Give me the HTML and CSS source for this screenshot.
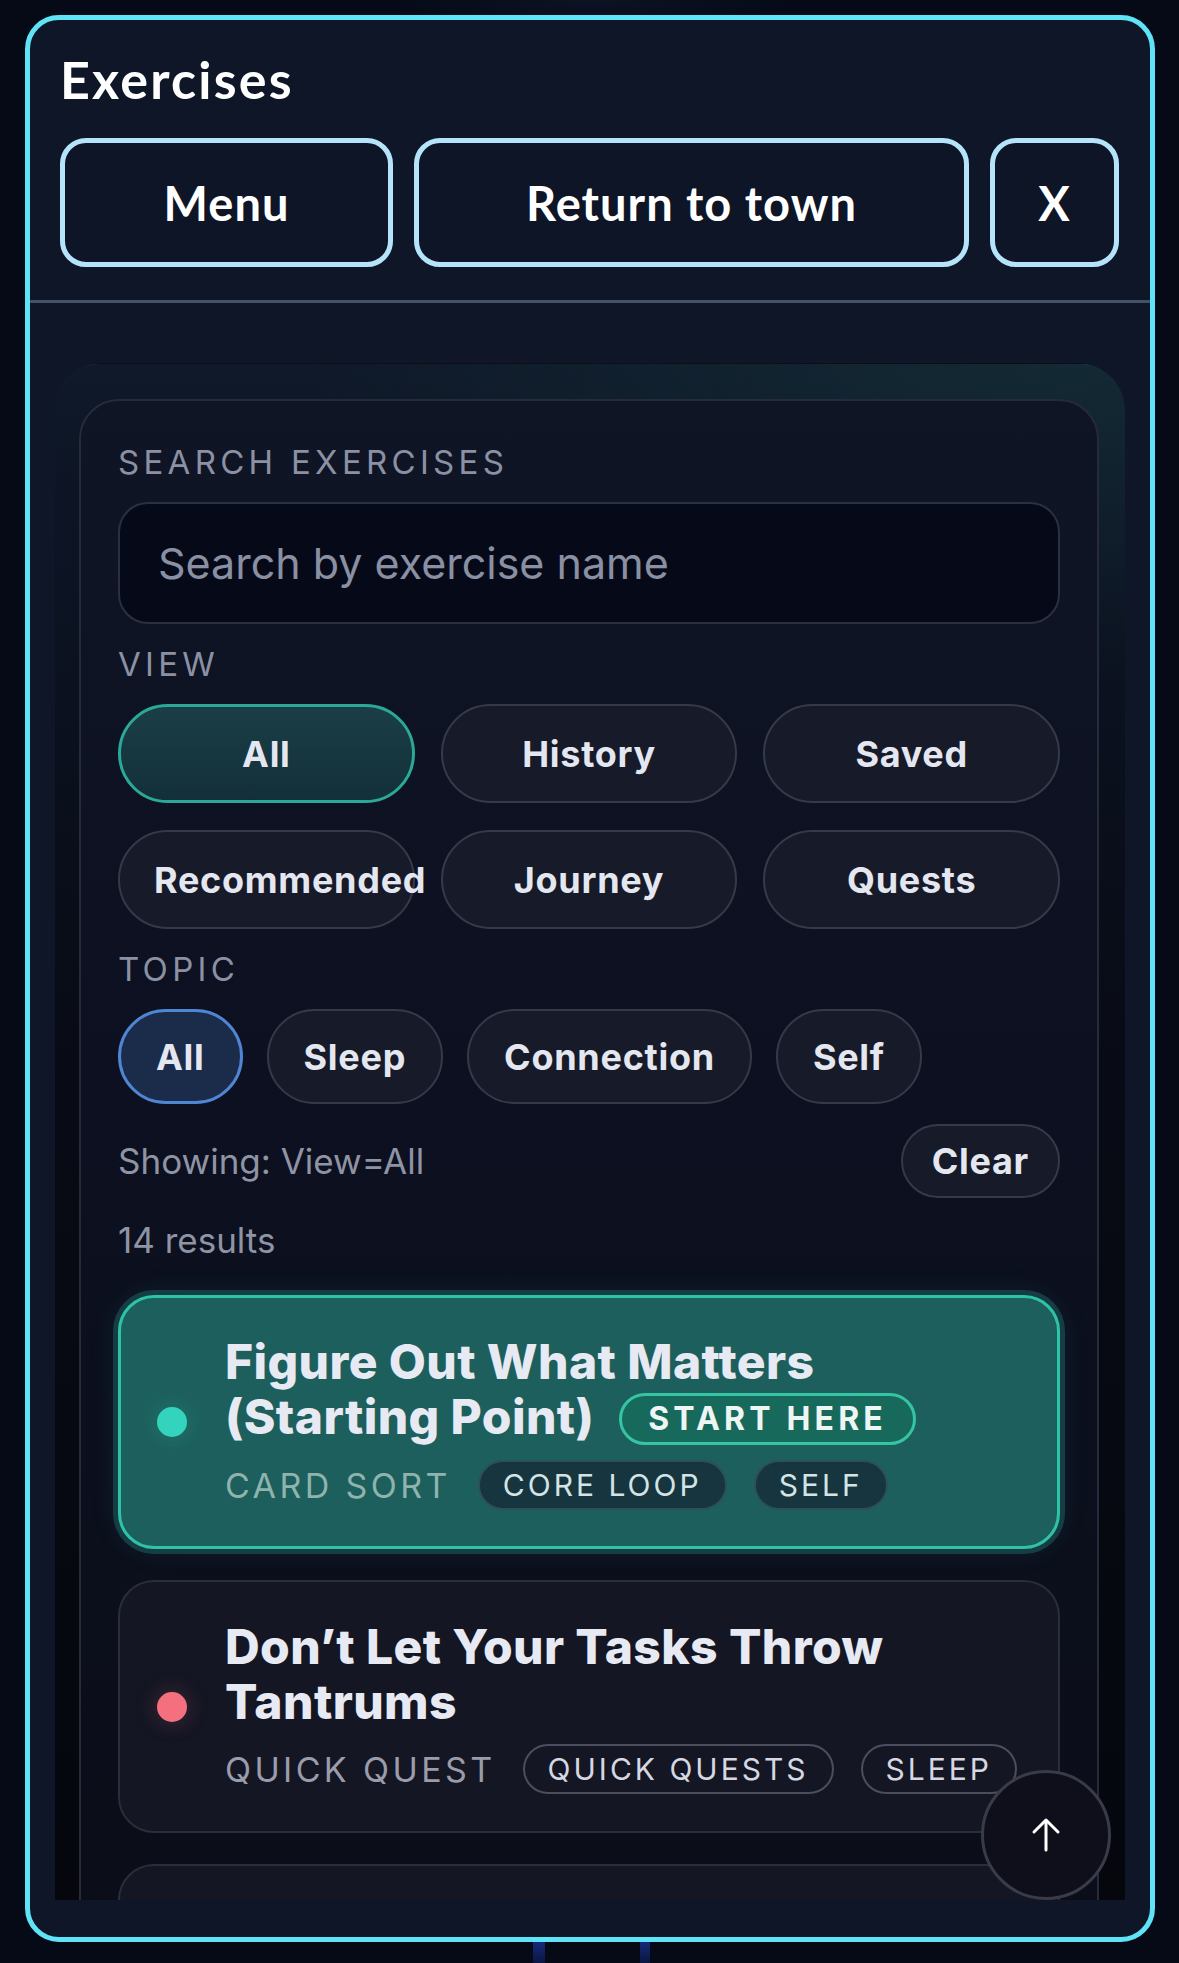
FILE: index.html
```html
<!DOCTYPE html>
<html lang="en">
<head>
    <meta charset="UTF-8">
    <meta name="viewport" content="width=device-width, initial-scale=1.0">
    <title>Exercises</title>
    <link rel="stylesheet" href="styles.css">
</head>
<body>

    <div class="panel">
        <header class="panel-head">
            <h1 class="panel-title">Exercises</h1>
            <div class="head-actions">
                <button class="head-btn">Menu</button>
                <button class="head-btn">Return to town</button>
                <button class="head-btn">X</button>
            </div>
        </header>

        <div class="panel-scroll">
            <section class="shell">
                <div class="filters">
                    <label class="field-label" for="search">Search exercises</label>
                    <input id="search" class="search" type="text" placeholder="Search by exercise name">

                    <div class="field-label">View</div>
                    <div class="view-grid">
                        <button class="chip chip-view is-active">All</button>
                        <button class="chip chip-view">History</button>
                        <button class="chip chip-view">Saved</button>
                        <button class="chip chip-view">Recommended</button>
                        <button class="chip chip-view">Journey</button>
                        <button class="chip chip-view">Quests</button>
                    </div>

                    <div class="field-label">Topic</div>
                    <div class="topic-row">
                        <button class="chip chip-topic is-active">All</button>
                        <button class="chip chip-topic">Sleep</button>
                        <button class="chip chip-topic">Connection</button>
                        <button class="chip chip-topic">Self</button>
                    </div>

                    <div class="status-row">
                        <span class="muted">Showing: View=All</span>
                        <button class="chip chip-clear">Clear</button>
                    </div>
                    <div class="muted count">14 results</div>

                    <!-- Results -->
                    <ul class="results">
                        <li class="result is-start">
                            <span class="dot dot-teal"></span>
                            <div class="result-body">
                                <div class="result-title"><span>Figure Out What Matters (Starting Point)</span> <span class="badge">Start here</span></div>
                                <div class="result-meta">
                                    <span class="kind">Card sort</span>
                                    <span class="tag">Core loop</span>
                                    <span class="tag">Self</span>
                                </div>
                            </div>
                        </li>
                        <li class="result">
                            <span class="dot dot-red"></span>
                            <div class="result-body">
                                <div class="result-title">Don’t Let Your Tasks Throw Tantrums</div>
                                <div class="result-meta">
                                    <span class="kind">Quick quest</span>
                                    <span class="tag">Quick quests</span>
                                    <span class="tag">Sleep</span>
                                </div>
                            </div>
                        </li>
                        <li class="result">
                            <span class="dot dot-teal"></span>
                            <div class="result-body">
                                <div class="result-title">Sort Your Week</div>
                                <div class="result-meta">
                                    <span class="kind">Card sort</span>
                                    <span class="tag">Self</span>
                                </div>
                            </div>
                        </li>
                    </ul>
                </div>
            </section>
        </div>

        <button class="to-top" aria-label="Back to top">
            <svg width="40" height="40" viewBox="0 0 40 40" fill="none" stroke="#ffffff" stroke-width="3" stroke-linecap="round" stroke-linejoin="round">
                <path d="M20 35V6"/>
                <path d="M8 17L20 5L32 17"/>
            </svg>
        </button>
    </div>

</body>
</html>
```

FILE: styles.css
```css
html, body {
    margin: 0;
    min-height: 1963px;
}
body {
    font-family: "Inter", "Noto Sans", sans-serif;
    color: #e6e9f2;
    overflow: hidden;
    background:
        linear-gradient(#15297a, #0b1640) 533px 1942px / 12px 21px no-repeat,
        linear-gradient(#15297a, #0b1640) 640px 1942px / 10px 21px no-repeat,
        radial-gradient(ellipse 200px 30px at 590px 0, #0c1324, transparent),
        #050a16;
}

/* outer frame */
.panel {
    position: relative;
    box-sizing: border-box;
    width: 1130px;
    height: 1927px;
    margin: 15px 0 0 25px;
    padding-bottom: 37px;
    border: 5px solid #5ee4f6;
    border-radius: 34px;
    background: #0e1627;
    display: flex;
    flex-direction: column;
    overflow: hidden;
}
.panel-head {
    padding: 29px 31px 33px 30px;
    border-bottom: 3px solid #435266;
}
.panel-title {
    margin: 0 0 28px;
    font: 700 52px/61px "Lato", sans-serif;
    letter-spacing: 2.2px;
    color: #ffffff;
}
.head-actions {
    display: grid;
    grid-template-columns: 333px 1fr 129px;
    gap: 21px;
}
.head-btn {
    height: 129px;
    box-sizing: border-box;
    border: 5px solid #b5e3fa;
    border-radius: 26px;
    background: #0d1526;
    color: #ffffff;
    font: 700 47px "Lato", sans-serif;
    letter-spacing: 1px;
    padding: 0;
}

/* scrolling area */
.panel-scroll {
    flex: 1;
    overflow: hidden;
    padding: 60px 25px 0;
}
.shell {
    border-radius: 48px 48px 0 0;
    padding: 35px 26px 0 24px;
    border-top: 1px solid rgba(255, 255, 255, 0.04);
    background:
        radial-gradient(ellipse 760px 320px at 95% 0, rgba(22, 52, 60, 0.6), rgba(22, 52, 60, 0) 100%),
        linear-gradient(180deg, #0f1929 0, #0c1322 12%, #080b15 40%, #04060b 100%);
}
.filters {
    border: 2px solid #262b3a;
    border-radius: 40px;
    padding: 41px 37px 40px;
    background: linear-gradient(180deg, #101526 0, #0c1020 40%, #0b0d17 100%);
    display: flex;
    flex-direction: column;
    gap: 20px;
}
.field-label {
    font-size: 33px;
    line-height: 40px;
    letter-spacing: 0.13em;
    text-transform: uppercase;
    color: #8b91a3;
}
.search {
    box-sizing: border-box;
    height: 122px;
    width: 100%;
    padding: 0 38px;
    border: 2px solid #2a303f;
    border-radius: 30px;
    background: #060a18;
    color: #e6e9f2;
    font: 400 43px "Inter", sans-serif;
    outline: none;
}
.search::placeholder {
    color: #8a90a3;
}

/* chips */
.chip {
    box-sizing: border-box;
    border: 2px solid #353a48;
    border-radius: 60px;
    background: #171a28;
    color: #e4e7f0;
    font: 700 36px "Inter", sans-serif;
    letter-spacing: 0.02em;
    white-space: nowrap;
    cursor: pointer;
}
.view-grid {
    display: grid;
    grid-template-columns: repeat(3, minmax(0, 1fr));
    gap: 27px 26px;
}
.chip-view {
    min-width: 0;
    height: 99px;
    padding: 0 34px;
    text-align: center;
    overflow: visible;
}
.chip-view.is-active {
    border: 3px solid #2aa998;
    background: linear-gradient(180deg, #1b3e46, #13303a);
}
.topic-row {
    display: flex;
    gap: 24px;
}
.chip-topic {
    height: 95px;
    padding: 0 35px;
}
.chip-topic.is-active {
    border: 3px solid #4f86d3;
    background: #1b2c4b;
}
.status-row {
    display: flex;
    justify-content: space-between;
    align-items: center;
}
.chip-clear {
    height: 74px;
    padding: 0 29px;
}
.muted {
    font-size: 35px;
    line-height: 44px;
    color: #8f94a5;
}

/* result cards */
.results {
    list-style: none;
    margin: 13px 0 0;
    padding: 0;
    display: flex;
    flex-direction: column;
    gap: 31px;
}
.result {
    display: flex;
    align-items: center;
    gap: 38px;
    padding: 37px 36px 37px 37px;
    border: 2px solid #2a2d3b;
    border-radius: 36px;
    background: #141623;
}
.result.is-start {
    padding: 36px 35px 36px 36px;
    border: 3px solid #2ec2a9;
    background: #1d5f5c;
    box-shadow: 0 0 0 5px #163d43, 0 0 30px rgba(46, 194, 169, 0.12);
}
.dot {
    flex: none;
    width: 30px;
    height: 30px;
    border-radius: 50%;
}
.dot-teal {
    background: #33d3bd;
    box-shadow: 0 0 22px rgba(51, 211, 189, 0.25);
}
.dot-red {
    background: #f4707f;
    box-shadow: 0 0 22px rgba(244, 112, 127, 0.25);
}
.result-title {
    font-size: 48px;
    line-height: 55px;
    font-weight: 800;
    letter-spacing: 0.4px;
    color: #e7eaf3;
}
.badge {
    display: inline-block;
    box-sizing: border-box;
    height: 52px;
    margin-left: 14px;
    padding: 0 26px;
    border: 3px solid #35c4a4;
    border-radius: 26px;
    background: #176a5b;
    color: #eef6f4;
    font-size: 32px;
    line-height: 46px;
    font-weight: 700;
    letter-spacing: 0.13em;
    text-transform: uppercase;
    vertical-align: 4px;
}
.result-meta {
    display: flex;
    align-items: center;
    gap: 27px;
    margin-top: 15px;
}
.kind {
    font-size: 34px;
    letter-spacing: 0.1em;
    text-transform: uppercase;
    color: #9a9cab;
}
.is-start .kind {
    color: #8fb3ae;
}
.tag {
    box-sizing: border-box;
    height: 50px;
    padding: 0 23px;
    border: 2px solid #4a4e5e;
    border-radius: 25px;
    font-size: 30px;
    line-height: 46px;
    letter-spacing: 0.1em;
    text-transform: uppercase;
    color: #d5d8e2;
}
.is-start .tag {
    border-color: #2d4f58;
    background: #16353e;
    color: #d4e4e6;
}

/* floating back-to-top */
.to-top {
    position: absolute;
    right: 39px;
    bottom: 37px;
    width: 130px;
    height: 130px;
    border: 3px solid #393c48;
    border-radius: 50%;
    background: #0e0f1b;
    display: flex;
    align-items: center;
    justify-content: center;
    padding: 0;
}
```
